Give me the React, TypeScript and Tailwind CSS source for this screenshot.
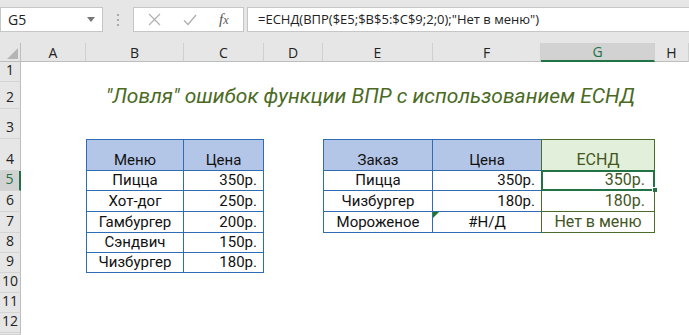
import React from "react";

const F = { fontFamily: "Roboto, 'Liberation Sans', sans-serif" };
const UI = { fontFamily: "'Open Sans', 'Noto Sans', sans-serif" };

const ROWS = ["1", "2", "3", "4", "5", "6", "7", "8", "9", "10", "11", "12", ""];

const blue = "border-[#2f6cb3]";
const green = "border-[#4d6b2c]";

function RowHead({ n }: { n: string }) {
  const sel = n === "5";
  return (
    <div
      className={`flex items-end justify-center pb-[1px] text-[14px] border-b border-[#d4d4d4] ${
        sel
          ? "bg-[#d2d2d2] text-[#217346] border-r-2 border-r-[#217346]"
          : "bg-[#e6e6e6] text-[#222] border-r border-r-[#bdbdbd]"
      }`}
      style={UI}
    >
      {n}
    </div>
  );
}

function Empty() {
  return <div />;
}

function Cell({
  children,
  cls = "",
  align = "center",
}: {
  children?: React.ReactNode;
  cls?: string;
  align?: "center" | "right";
}) {
  return (
    <div
      className={`relative flex items-end pb-[1px] text-[15px] leading-[18px] text-[#111] ${
        align === "right" ? "justify-end pr-[6px]" : "justify-center"
      } ${cls}`}
      style={F}
    >
      {children}
    </div>
  );
}

export default function App() {
  const colHeads = ["A", "B", "C", "D", "E", "F", "G", "H"];
  const menu: [string, string][] = [
    ["Пицца", "350р."],
    ["Хот-дог", "250р."],
    ["Гамбургер", "200р."],
    ["Сэндвич", "150р."],
    ["Чизбургер", "180р."],
  ];
  const orders: [string, string, string][] = [
    ["Пицца", "350р.", "350р."],
    ["Чизбургер", "180р.", "180р."],
    ["Мороженое", "#Н/Д", "Нет в меню"],
  ];

  const rows: React.ReactNode[] = [];
  ROWS.forEach((n, i) => {
    const r = i + 1;
    rows.push(<RowHead key={`h${r}`} n={n} />);
    if (r === 2) {
      rows.push(<Empty key="a2" />);
      rows.push(
        <div
          key="title"
          className="col-span-6 flex items-end justify-center pb-[1px] text-[21px] italic leading-[24px] text-[#4b6a24]"
          style={F}
        >
          "Ловля" ошибок функции ВПР с использованием ЕСНД
        </div>
      );
      rows.push(<Empty key="h2" />);
      return;
    }
    const cells: React.ReactNode[] = [];
    cells.push(<Empty key="A" />);
    if (r === 4) {
      cells.push(
        <Cell key="B" cls={`bg-[#b4c6e7] border ${blue}`}>
          Меню
        </Cell>
      );
      cells.push(
        <Cell key="C" cls={`bg-[#b4c6e7] border-t border-r border-b ${blue}`}>
          Цена
        </Cell>
      );
    } else if (r >= 5 && r <= 9) {
      const [m, p] = menu[r - 5];
      cells.push(
        <Cell key="B" cls={`border-l border-r border-b ${blue}`}>
          {m}
        </Cell>
      );
      cells.push(
        <Cell key="C" align="right" cls={`border-r border-b ${blue}`}>
          {p}
        </Cell>
      );
    } else {
      cells.push(<Empty key="B" />, <Empty key="C" />);
    }
    cells.push(<Empty key="D" />);
    if (r === 4) {
      cells.push(
        <Cell key="E" cls={`bg-[#b4c6e7] border ${blue}`}>
          Заказ
        </Cell>
      );
      cells.push(
        <Cell key="F" cls={`bg-[#b4c6e7] border-t border-b ${blue}`}>
          Цена
        </Cell>
      );
      cells.push(
        <Cell key="G" cls={`bg-[#e2efda] border ${green} text-[16px] !text-[#44561f]`}>
          ЕСНД
        </Cell>
      );
    } else if (r >= 5 && r <= 7) {
      const [o, p, g] = orders[r - 5];
      cells.push(
        <Cell key="E" cls={`border-l border-r border-b ${blue}`}>
          {o}
        </Cell>
      );
      cells.push(
        <Cell
          key="F"
          align={r === 7 ? "center" : "right"}
          cls={`border-b ${blue}`}
        >
          {r === 7 && (
            <span className="absolute left-0 top-0 h-0 w-0 border-t-[6px] border-r-[6px] border-t-[#1f7a1f] border-r-transparent" />
          )}
          {p}
        </Cell>
      );
      cells.push(
        <Cell
          key="G"
          align={r === 7 ? "center" : "right"}
          cls={`border-l border-r border-b ${green} text-[16px] !text-[#44561f] ${r !== 7 ? "!pr-[9px]" : ""}`}
        >
          {r === 5 && (
            <>
              <span className="pointer-events-none absolute -left-[1px] -top-[1px] -right-[1px] -bottom-[1px] border-2 border-[#217346]" />
              <span className="absolute -bottom-[3px] -right-[4px] h-[6px] w-[6px] border border-white bg-[#217346]" />
            </>
          )}
          {g}
        </Cell>
      );
    } else {
      cells.push(<Empty key="E" />, <Empty key="F" />, <Empty key="G" />);
    }
    cells.push(<Empty key="H" />);
    rows.push(<React.Fragment key={`r${r}`}>{cells}</React.Fragment>);
  });

  return (
    <div className="h-[335px] w-[689px] overflow-hidden bg-white">
      <div className="flex h-[43px] items-start bg-[#e6e6e6] pt-[7px]">
        <div className="flex h-[25px] w-[103px] items-center justify-between border border-[#c6c6c6] bg-white pl-[7px] pr-[7px]">
          <span className="text-[14px] text-[#222]" style={UI}>
            G5
          </span>
          <svg width="8" height="5" viewBox="0 0 8 5">
            <path d="M0 0 L8 0 L4 5 Z" fill="#777" />
          </svg>
        </div>
        <div className="flex h-[25px] w-[30px] flex-col items-center justify-center gap-[3px]">
          <span className="h-[2px] w-[2px] bg-[#a8a8a8]" />
          <span className="h-[2px] w-[2px] bg-[#a8a8a8]" />
          <span className="h-[2px] w-[2px] bg-[#a8a8a8]" />
        </div>
        <div className="flex h-[25px] w-[111px] items-center border border-[#c6c6c6] bg-white">
          <svg className="ml-[14px]" width="13" height="13" viewBox="0 0 13 13">
            <path d="M1 1 L12 12 M12 1 L1 12" stroke="#b0b0b0" strokeWidth="1.2" />
          </svg>
          <svg className="ml-[22px]" width="14" height="12" viewBox="0 0 14 12">
            <path d="M1 6.5 L5 10.5 L13 1" stroke="#b0b0b0" strokeWidth="1.4" fill="none" />
          </svg>
          <span
            className="ml-[22px] text-[15px] italic text-[#555]"
            style={{ fontFamily: "'Liberation Serif', serif" }}
          >
            f<span className="text-[12px]">x</span>
          </span>
        </div>
        <div className="ml-[3px] flex h-[25px] flex-1 items-center border border-r-0 border-[#c6c6c6] bg-white pl-[10px]">
          <span className="text-[13px] text-[#222]" style={UI}>
            =ЕСНД(ВПР($E5;$B$5:$C$9;2;0);"Нет в меню")
          </span>
        </div>
      </div>
      <div className="grid h-[292px] grid-cols-[21px_65px_98px_80px_59px_110px_108px_114px_1fr] grid-rows-[19px_20px_27px_30px_32px_20px_21px_21px_20px_20px_20px_20px_20px_1fr]">
        <div className="relative border-b border-r border-[#bdbdbd] bg-[#e6e6e6]">
          <svg className="absolute bottom-[2px] right-[2px]" width="11" height="11" viewBox="0 0 11 11">
            <path d="M11 0 L11 11 L0 11 Z" fill="#b5b5b5" />
          </svg>
        </div>
        {colHeads.map((c) => {
          const sel = c === "G";
          return (
            <div
              key={c}
              className={`flex items-center justify-center text-[14px] border-r border-r-[#d0d0d0] ${
                sel
                  ? "bg-[#d2d2d2] text-[#217346] border-b-2 border-b-[#217346]"
                  : "bg-[#e6e6e6] text-[#222] border-b border-b-[#bdbdbd]"
              }`}
              style={UI}
            >
              {c}
            </div>
          );
        })}
        {rows}
      </div>
    </div>
  );
}
